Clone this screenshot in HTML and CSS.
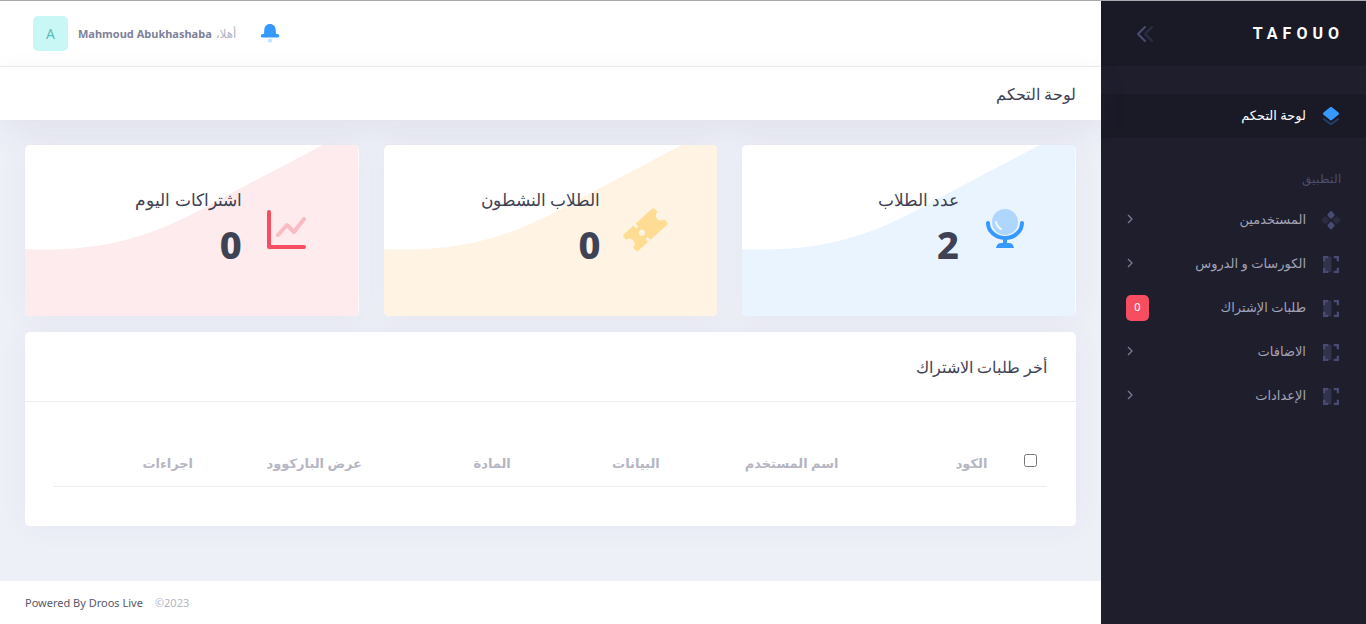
FILE: index.html
```html
<!DOCTYPE html>
<html lang="ar" dir="rtl">
<head>
<meta charset="utf-8">
<title>لوحة التحكم</title>
<link rel="stylesheet" href="styles.css">
</head>
<body>
<svg class="defs" aria-hidden="true">
  <symbol id="frame" viewBox="0 0 24 24">
    <g fill="none" stroke="#494b74" stroke-width="2.500"><path d="M4.500 9V4.500H9M15 4.500h4.500V9M19.500 16v4.500H15M9 20.500H4.500V16"/></g>
    <path d="M3.500 4h9v17h-9z" fill="#494b74" opacity=".45"/>
  </symbol>
  <symbol id="chev" viewBox="0 0 12 12"><path d="M4 2l4 4-4 4" fill="none" stroke="#7d7f9c" stroke-width="1.200"/></symbol>
  <symbol id="wave" viewBox="0 0 334 171" preserveAspectRatio="none"><path d="M0 104Q20 105 40 104C105 101 150 80 201 51L298 0H334V171H0Z" fill="currentColor"/></symbol>
</svg>
<div class="app">
  <aside class="side">
    <div class="brand">
      <a class="logo" href="#" dir="ltr">TAFOUO</a>
      <button class="toggle" type="button" aria-label="طي القائمة">
        <svg viewBox="0 0 24 24" width="24" height="24" fill="none" stroke="#494b74" stroke-width="2" stroke-linecap="round" stroke-linejoin="round"><path d="M12 5l-7 7 7 7"/><path d="M19 5l-7 7 7 7" opacity=".4"/></svg>
      </button>
    </div>
    <nav class="menu">
      <a class="item active" href="#"><svg class="ico" viewBox="1 1 22 22"><path d="M12.900 16.100l6.600-5.300a1.500 1.500 0 0 0 0-2.300l-6.600-5.300a1.500 1.500 0 0 0-1.800 0L4.500 8.500a1.500 1.500 0 0 0 0 2.300l6.600 5.300a1.500 1.500 0 0 0 1.800 0z" fill="#3699ff"/><path d="M4.800 15l7.200 5.300 7.200-5.300" fill="none" stroke="#3699ff" stroke-width="2" stroke-linecap="round" opacity=".3"/></svg><span>لوحة التحكم</span></a>
      <h2 class="section">التطبيق</h2>
      <a class="item" href="#"><svg class="ico" viewBox="0 0 24 24" fill="#494b74" stroke="#494b74" stroke-width="2.500" stroke-linejoin="round"><path d="M12 3.500l2.700 3-2.700 3-2.700-3zM12 15l2.700 3-2.700 3-2.700-3z"/><path d="M6 9.200l3 3-3 3-3-3zM18 9.200l3 3-3 3-3-3z" opacity=".3"/></svg><span>المستخدمين</span><svg class="chev"><use href="#chev"/></svg></a>
      <a class="item" href="#"><svg class="ico"><use href="#frame"/></svg><span>الكورسات و الدروس</span><svg class="chev"><use href="#chev"/></svg></a>
      <a class="item" href="#"><svg class="ico"><use href="#frame"/></svg><span>طلبات الإشتراك</span><b class="badge">0</b></a>
      <a class="item" href="#"><svg class="ico"><use href="#frame"/></svg><span>الاضافات</span><svg class="chev"><use href="#chev"/></svg></a>
      <a class="item" href="#"><svg class="ico"><use href="#frame"/></svg><span>الإعدادات</span><svg class="chev"><use href="#chev"/></svg></a>
    </nav>
  </aside>
  <div class="page">
    <header class="top">
      <button class="bell" type="button" aria-label="الإشعارات"><svg viewBox="0 0 24 24" width="24" height="24"><path d="M12 2C8.500 2 6.500 4.500 6.300 7.500L6 12H4.500a1.700 1.700 0 0 0 0 3.500h15a1.700 1.700 0 0 0 0-3.500H18l-.3-4.500C17.500 4.500 15.500 2 12 2z" fill="#3699ff"/><rect x="10" y="16.500" width="4" height="4" rx="1.500" fill="#3699ff" opacity=".3"/></svg></button>
      <button class="user" type="button"><span class="hi">أهلا،</span><span class="name" dir="ltr">Mahmoud Abukhashaba</span><span class="avatar">A</span></button>
    </header>
    <div class="subhead"><h1>لوحة التحكم</h1></div>
    <main class="content">
      <div class="cards">
        <section class="card blue"><svg class="wave"><use href="#wave"/></svg>
          <svg class="big" viewBox="0 0 48 48"><circle cx="24" cy="17" r="13" fill="#3699ff" opacity=".32"/><path d="M15 17c1 4 3 6 5 7" fill="none" stroke="#fff" stroke-width="2" stroke-linecap="round" opacity=".8"/><path d="M7 18a17 15 0 0 0 34 0" fill="none" stroke="#3699ff" stroke-width="4" stroke-linecap="round"/><path d="M22 33h4v5h2q4 0 5 5H15q1-5 5-5h2z" fill="#3699ff"/></svg>
          <div><h2>عدد الطلاب</h2><strong>2</strong></div></section>
        <section class="card yellow"><svg class="wave"><use href="#wave"/></svg>
          <svg class="big" viewBox="0 0 48 48" fill="#ffdc94"><g transform="rotate(-42 24 24)"><path d="M20 13h22q2 0 2 2v4a5 5 0 0 0 0 10v4q0 2-2 2H20v-4h-3v4H4q-2 0-2-2v-4a5 5 0 0 0 0-10v-4q0-2 2-2h13v4h3z"/><circle cx="18.500" cy="24" r="3" fill="#fff4e3"/></g></svg>
          <div><h2>الطلاب النشطون</h2><strong>0</strong></div></section>
        <section class="card red"><svg class="wave"><use href="#wave"/></svg>
          <svg class="big" viewBox="0 0 48 48" fill="none" stroke="#f64e60" stroke-width="4" stroke-linecap="round" stroke-linejoin="round"><path d="M5 7v35h35"/><path d="M14 30l9-10 7 7 10-13" opacity=".3"/></svg>
          <div><h2>اشتراكات اليوم</h2><strong>0</strong></div></section>
      </div>
      <section class="panel">
        <header><h2>أخر طلبات الاشتراك</h2></header>
        <div class="wrap"><table>
          <colgroup><col class="c1"><col class="c2"><col class="c3"><col class="c2"><col class="c2"><col class="c4"><col></colgroup>
          <thead><tr><th><input type="checkbox" aria-label="تحديد الكل"></th><th>الكود</th><th>اسم المستخدم</th><th>البيانات</th><th>المادة</th><th>عرض الباركوود</th><th>اجراءات</th></tr></thead>
        </table></div>
      </section>
    </main>
    <footer class="foot" dir="ltr"><a href="#">Powered By Droos Live</a><span>©2023</span></footer>
  </div>
</div>
</body>
</html>
```
FILE: styles.css
```css
* { box-sizing: border-box; }
body { margin: 0; font-family: "Noto Sans", "DejaVu Sans", sans-serif; font-size: 13px; color: #3f4254; }
h1, h2 { margin: 0; font-weight: 300; }
a { color: inherit; text-decoration: none; }
button { border: 0; background: none; padding: 0; font: inherit; display: flex; align-items: center; }
.defs { display: none; }
.app { display: flex; min-height: 100vh; border-top: 1px solid #a9a9ad; }
.side { width: 265px; flex: none; background: #1e1e2d; }
.brand { height: 65px; background: #1a1a27; display: flex; align-items: center; justify-content: space-between; padding: 0 22px 0 32px; }
.logo { color: #fff; font: 700 16px Roboto, sans-serif; letter-spacing: 5px; }
.menu { padding-top: 28px; font-size: 13px; }
.item { display: flex; align-items: center; height: 44px; padding: 0 24px 0 25px; color: #a2a3b7; }
.item.active { background: #1a1a27; color: #fff; }
.item span { flex: 1; padding: 0 14px 3px 0; }
.ico { width: 22px; height: 22px; }
.chev { width: 12px; height: 12px; margin-left: -2px; margin-bottom: 2px; }
.section { height: 60px; padding: 32px 25px 0; font-size: 12px; color: #4c4e6f; }
.badge { background: #f64e60; color: #fff; border-radius: 5px; width: 23px; height: 26px; font-size: 11px; line-height: 24px; text-align: center; font-weight: 400; }
.page { flex: 1; min-width: 0; display: flex; flex-direction: column; background: #eef0f8; }
.top { height: 66px; background: #fff; border-bottom: 1px solid #ebedf3; display: flex; justify-content: flex-end; align-items: center; gap: 22px; padding: 0 33px; }
.user { gap: 4px; font-size: 12px; color: #b5b5c3; }
.name { font-weight: 700; font-size: 11px; color: #7e8299; }
.avatar { width: 35px; height: 35px; margin-right: 6px; border-radius: 5px; background: #c9f7f5; color: #59bdb8; font-size: 14px; line-height: 35px; text-align: center; }
.subhead { height: 53px; background: #fff; padding: 0 25px; display: flex; align-items: center; box-shadow: 0 10px 30px rgba(82, 63, 105, .08); }
.subhead h1 { font-size: 16px; }
.content { flex: 1; padding: 25px 25px 54px; }
.cards { display: grid; grid-template-columns: repeat(3, 1fr); gap: 25px; margin-bottom: 16px; }
.card, .panel { background: #fff; border-radius: 5px; box-shadow: 0 0 30px rgba(82, 63, 105, .05); }
.card { position: relative; overflow: hidden; height: 171px; display: flex; gap: 22px; padding: 42px 47px 0; }
.card > div { position: relative; }
.card h2 { font-size: 17px; line-height: 26px; }
.card strong { display: block; font-size: 38px; line-height: 62px; font-weight: 800; }
.wave { position: absolute; inset: 0; width: 100%; height: 100%; }
.big { position: relative; width: 48px; height: 48px; margin-top: 18px; }
.blue .wave { color: #e9f4ff; }
.yellow .wave { color: #fff4e3; }
.red .wave { color: #fdebed; }
.panel header { height: 70px; padding: 0 29px; display: flex; align-items: center; border-bottom: 1px solid #ebedf3; }
.panel h2 { font-size: 16px; }
.wrap { padding: 38px 29px 39px; }
table { width: 100%; border-collapse: collapse; table-layout: fixed; }
th { height: 46px; padding: 0; text-align: right; font-size: 13px; font-weight: 700; color: #b5b5c3; border-bottom: 1px solid #ebedf3; }
th input { display: block; width: 13px; height: 13px; margin: 0 10px 4px 0; }
.c1 { width: 6%; }
.c2 { width: 15%; }
.c3 { width: 18%; }
.c4 { width: 17%; }
.foot { background: #fff; height: 43px; padding: 0 25px; display: flex; align-items: center; gap: 12px; font-size: 11px; color: #b5b5c3; }
.foot a { color: #575966; }
```
